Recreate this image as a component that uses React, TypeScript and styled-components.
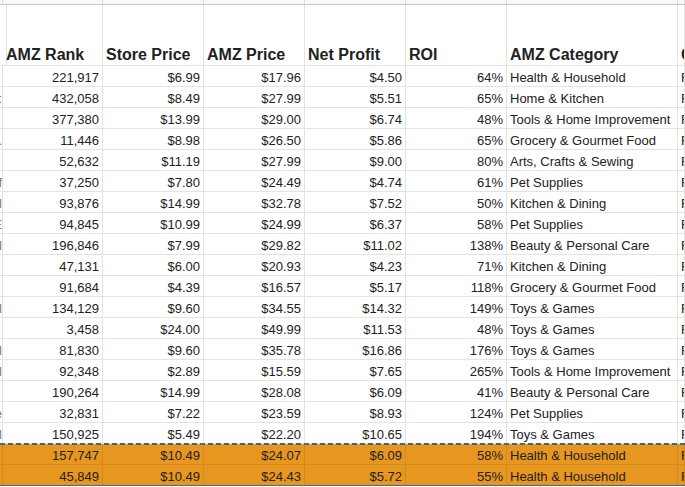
import styled, { createGlobalStyle } from "styled-components";

const GlobalStyle = createGlobalStyle`
  html, body {
    margin: 0;
    padding: 0;
    background: #ffffff;
    overflow: hidden;
  }
  * {
    box-sizing: border-box;
  }
`;

const COLS = "3px 100px 101px 101px 101px 101px 171px 1fr";

type Row = {
  stub: string;
  rank: string;
  store: string;
  amz: string;
  profit: string;
  roi: string;
  category: string;
};

const rows: Row[] = [
  { stub: "", rank: "221,917", store: "$6.99", amz: "$17.96", profit: "$4.50", roi: "64%", category: "Health & Household" },
  { stub: ":", rank: "432,058", store: "$8.49", amz: "$27.99", profit: "$5.51", roi: "65%", category: "Home & Kitchen" },
  { stub: "", rank: "377,380", store: "$13.99", amz: "$29.00", profit: "$6.74", roi: "48%", category: "Tools & Home Improvement" },
  { stub: ".", rank: "11,446", store: "$8.98", amz: "$26.50", profit: "$5.86", roi: "65%", category: "Grocery & Gourmet Food" },
  { stub: "", rank: "52,632", store: "$11.19", amz: "$27.99", profit: "$9.00", roi: "80%", category: "Arts, Crafts & Sewing" },
  { stub: "f", rank: "37,250", store: "$7.80", amz: "$24.49", profit: "$4.74", roi: "61%", category: "Pet Supplies" },
  { stub: "l", rank: "93,876", store: "$14.99", amz: "$32.78", profit: "$7.52", roi: "50%", category: "Kitchen & Dining" },
  { stub: "E", rank: "94,845", store: "$10.99", amz: "$24.99", profit: "$6.37", roi: "58%", category: "Pet Supplies" },
  { stub: "l", rank: "196,846", store: "$7.99", amz: "$29.82", profit: "$11.02", roi: "138%", category: "Beauty & Personal Care" },
  { stub: "", rank: "47,131", store: "$6.00", amz: "$20.93", profit: "$4.23", roi: "71%", category: "Kitchen & Dining" },
  { stub: "", rank: "91,684", store: "$4.39", amz: "$16.57", profit: "$5.17", roi: "118%", category: "Grocery & Gourmet Food" },
  { stub: "l", rank: "134,129", store: "$9.60", amz: "$34.55", profit: "$14.32", roi: "149%", category: "Toys & Games" },
  { stub: "", rank: "3,458", store: "$24.00", amz: "$49.99", profit: "$11.53", roi: "48%", category: "Toys & Games" },
  { stub: "l", rank: "81,830", store: "$9.60", amz: "$35.78", profit: "$16.86", roi: "176%", category: "Toys & Games" },
  { stub: "l", rank: "92,348", store: "$2.89", amz: "$15.59", profit: "$7.65", roi: "265%", category: "Tools & Home Improvement" },
  { stub: "", rank: "190,264", store: "$14.99", amz: "$28.08", profit: "$6.09", roi: "41%", category: "Beauty & Personal Care" },
  { stub: "e", rank: "32,831", store: "$7.22", amz: "$23.59", profit: "$8.93", roi: "124%", category: "Pet Supplies" },
  { stub: "l", rank: "150,925", store: "$5.49", amz: "$22.20", profit: "$10.65", roi: "194%", category: "Toys & Games" },
];

const picked: Row[] = [
  { stub: "", rank: "157,747", store: "$10.49", amz: "$24.07", profit: "$6.09", roi: "58%", category: "Health & Household" },
  { stub: "", rank: "45,849", store: "$10.49", amz: "$24.43", profit: "$5.72", roi: "55%", category: "Health & Household" },
];

const Sheet = styled.div`
  width: 685px;
  height: 487px;
  overflow: hidden;
  font-family: "Liberation Sans", Arial, sans-serif;
  color: #222222;
`;

const GridRow = styled.div<{ $height: number; $fill?: string }>`
  display: grid;
  grid-template-columns: ${COLS};
  height: ${(p) => p.$height}px;
  background: ${(p) => p.$fill || "transparent"};
`;

/* sheets cells sit on the bottom edge, hence the extra top padding */
const Cell = styled.div<{ $align?: "left" | "right"; $line?: string }>`
  border-right: 1px solid ${(p) => p.$line || "#e2e3e3"};
  border-bottom: 1px solid ${(p) => p.$line || "#e2e3e3"};
  padding: 2px 3px 0;
  font-size: 13px;
  line-height: 20px;
  text-align: ${(p) => p.$align || "left"};
  white-space: nowrap;
  overflow: hidden;
`;

const StubCell = styled(Cell)`
  padding: 2px 0 0;
  text-align: right;
  direction: rtl;
  color: #777777;
`;

const TopStrip = styled.div`
  display: grid;
  grid-template-columns: ${COLS};
  height: 5px;
  background: #f8f9fa;
  border-bottom: 1px solid #c4c7c5;
`;

const StripCell = styled.div`
  border-right: 1px solid #dadcde;
`;

const HeadCell = styled.div`
  display: flex;
  align-items: flex-end;
  padding: 0 3px 1px;
  border-right: 1px solid #e2e3e3;
  border-bottom: 1px solid #e2e3e3;
  font-size: 16px;
  font-weight: bold;
  line-height: 18px;
  white-space: nowrap;
  overflow: hidden;
`;

const Picked = styled.div`
  position: relative;

  &::before {
    content: "";
    position: absolute;
    left: 0;
    right: 0;
    top: -1px;
    height: 2px;
    background: repeating-linear-gradient(
      90deg,
      #3e6a86 0 5px,
      transparent 5px 8px
    );
  }

  &::after {
    content: "";
    position: absolute;
    left: 0;
    right: 0;
    bottom: 0;
    height: 1px;
    background: #46697f;
  }
`;

function DataRow({ row, orange }: { row: Row; orange?: boolean }) {
  const line = orange ? "#d08a1e" : undefined;
  return (
    <GridRow $height={21} $fill={orange ? "#e7961f" : undefined}>
      <StubCell $line={line}>{row.stub}</StubCell>
      <Cell $align="right" $line={line}>{row.rank}</Cell>
      <Cell $align="right" $line={line}>{row.store}</Cell>
      <Cell $align="right" $line={line}>{row.amz}</Cell>
      <Cell $align="right" $line={line}>{row.profit}</Cell>
      <Cell $align="right" $line={line}>{row.roi}</Cell>
      <Cell $line={line}>{row.category}</Cell>
      <Cell $line={line}>F</Cell>
    </GridRow>
  );
}

const headers = ["", "AMZ Rank", "Store Price", "AMZ Price", "Net Profit", "ROI", "AMZ Category", "Category"];

export default function App() {
  return (
    <>
      <GlobalStyle />
      <Sheet>
        <TopStrip>
          {headers.map((_, i) => (
            <StripCell key={i} />
          ))}
        </TopStrip>
        <GridRow $height={61}>
          {headers.map((h, i) => (
            <HeadCell key={i}>{h}</HeadCell>
          ))}
        </GridRow>
        {rows.map((r, i) => (
          <DataRow key={i} row={r} />
        ))}
        <Picked>
          {picked.map((r, i) => (
            <DataRow key={i} row={r} orange />
          ))}
        </Picked>
      </Sheet>
    </>
  );
}
